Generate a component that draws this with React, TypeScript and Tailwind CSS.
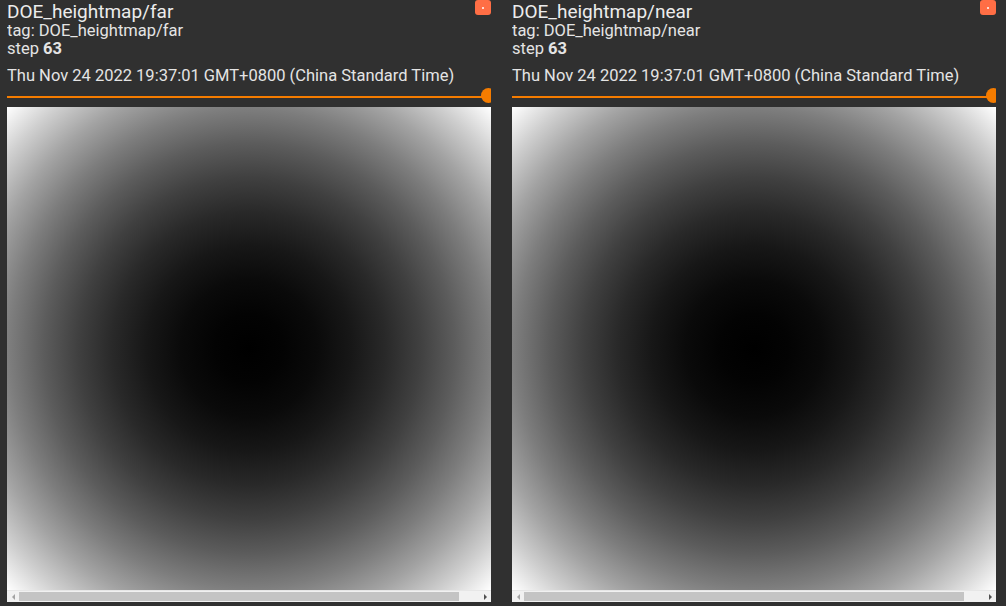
import React from "react";

function Panel({ name }: { name: string }) {
  return (
    <div className="relative w-[484px] h-[606px] flex flex-col overflow-hidden shrink-0">
      <div className="pt-[1px] text-[19px] leading-[21px] text-[#ececec] whitespace-nowrap">DOE_heightmap/{name}</div>
      <div className="text-[16.5px] leading-[18px] text-[#e4e4e4] whitespace-nowrap">tag: DOE_heightmap/{name}</div>
      <div className="text-[16.5px] leading-[18px] text-[#e4e4e4]">
        step <span className="font-bold">63</span>
      </div>
      <div className="mt-[7px] text-[16.5px] leading-[21px] text-[#e4e4e4] whitespace-nowrap">
        Thu Nov 24 2022 19:37:01 GMT+0800 (China Standard Time)
      </div>
      <div className="relative h-[21px] flex items-center">
        <div className="w-full h-[2px] bg-[#f57c00]" />
        <div className="absolute right-[-5px] top-[2px] w-[15px] h-[15px] rounded-full bg-[#f57c00]" />
      </div>
      <div className="h-[483px] w-full bg-[radial-gradient(circle_farthest-corner,#000000_0%,#030303_10%,#0a0a0a_20%,#171717_30%,#292929_40%,#404040_50%,#5c5c5c_60%,#7d7d7d_70%,#a3a3a3_80%,#cfcfcf_90%,#ffffff_100%)]" />
      <div className="h-[12px] w-full flex bg-[#f1f1f1] border-t border-[#e6e6e6]">
        <div className="w-[12px] h-full flex items-center justify-center">
          <div className="w-0 h-0 border-y-[3px] border-y-transparent border-r-[3px] border-r-[#a3a3a3]" />
        </div>
        <div className="w-[440px] my-[1px] bg-[#c4c4c4]" />
        <div className="flex-1" />
        <div className="w-[12px] h-full flex items-center justify-center">
          <div className="w-0 h-0 border-y-[3px] border-y-transparent border-l-[3px] border-l-[#505050]" />
        </div>
      </div>
      <div className="absolute top-0 right-0 w-[16px] h-[15px] bg-[#ff6e45] rounded-[3px] flex items-center justify-center">
        <div className="w-[2px] h-[2px] bg-white rounded-full" />
      </div>
    </div>
  );
}

export default function App() {
  return (
    <div className="w-[1006px] h-[606px] bg-[#303030] flex gap-[21px] pl-[7px] overflow-hidden font-['Roboto',sans-serif]">
      <Panel name="far" />
      <Panel name="near" />
    </div>
  );
}
